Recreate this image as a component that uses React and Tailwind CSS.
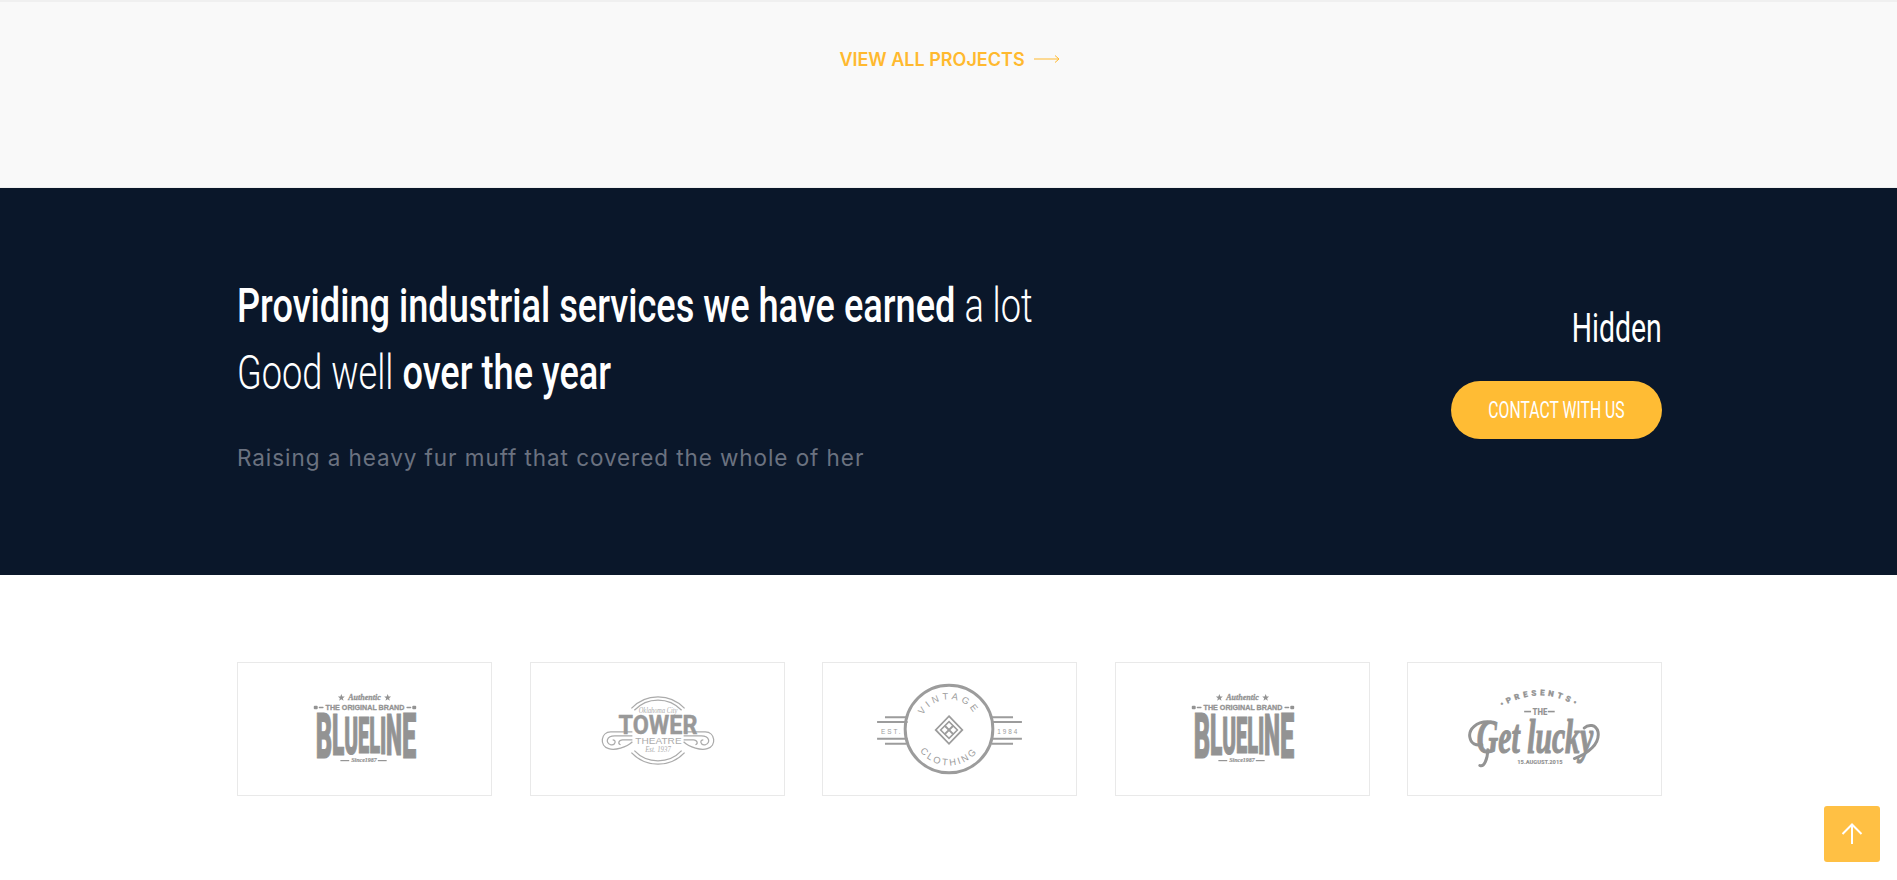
import React from "react";

const cond = "font-['Roboto',sans-serif]";

const blue = [
  ["B", 0.64], ["L", 0.54], ["U", 0.65], ["E", 0.56],
  ["L", 0.54], ["I", 0.29], ["N", 0.7], ["E", 0.56],
];

function Star({ x, y }) {
  return <polygon points={`${x},${y - 3.5} ${x + 1},${y - 1} ${x + 3.5},${y - 1} ${x + 1.5},${y + 0.7} ${x + 2.2},${y + 3.2} ${x},${y + 1.7} ${x - 2.2},${y + 3.2} ${x - 1.5},${y + 0.7} ${x - 3.5},${y - 1} ${x - 1},${y - 1}`} />;
}

function BluelineWord() {
  const base = blue.map(([ch, a], i) => {
    const t = (i - 3.5) / 3.5;
    const inset = 5 * (1 - t * t);
    const size = (46 - inset * 2) / 0.711;
    return { ch, a, inset, size };
  });
  const total = base.reduce((s, l) => s + l.a * l.size, 0);
  const sx = 102 / total;
  let pos = 0;
  const spans = base.map((l, i) => {
    const x = pos;
    pos += l.a * l.size;
    return (
      <tspan key={i} x={x} y={96 - l.inset} fontSize={l.size}>{l.ch}</tspan>
    );
  });
  return (
    <text transform={`translate(78 0) scale(${sx} 1)`} fontWeight="900" stroke="#939393" strokeWidth="1.2" className={cond}>
      {spans}
    </text>
  );
}

function Blueline() {
  return (
    <svg viewBox="0 0 255 134" className="w-full h-full" fill="#939393">
      <Star x={104} y={35} />
      <Star x={151} y={35} />
      <text x="127.5" y="38" fontSize="8" fontWeight="700" fontStyle="italic" textAnchor="middle" textLength="33" lengthAdjust="spacingAndGlyphs" stroke="#939393" strokeWidth="0.3" className="font-['Liberation_Serif']">Authentic</text>
      <rect x="76" y="43.5" width="4" height="3.5" rx="1" />
      <rect x="81" y="44.5" width="5" height="1.5" rx="0.7" />
      <rect x="170" y="44.5" width="5" height="1.5" rx="0.7" />
      <rect x="176" y="43.5" width="4" height="3.5" rx="1" />
      <text x="128" y="48" fontSize="7" fontWeight="700" textAnchor="middle" textLength="80" lengthAdjust="spacingAndGlyphs" stroke="#939393" strokeWidth="0.3" className="font-['Liberation_Sans']">THE ORIGINAL BRAND</text>
      <BluelineWord />
      <rect x="103" y="98.5" width="9" height="1.2" />
      <rect x="141" y="98.5" width="9" height="1.2" />
      <text x="127" y="101" fontSize="7" fontWeight="700" fontStyle="italic" textAnchor="middle" textLength="26" lengthAdjust="spacingAndGlyphs" stroke="#939393" strokeWidth="0.2" className="font-['Liberation_Serif']">Since1987</text>
    </svg>
  );
}

function Tower() {
  const c = "#ababab";
  const scroll = "M102 74 H84 C76 74 74 81 80 83 C85 84 86 78 82 78 M102 70 H80 C70 70 68 84 78 87 C84 89 96 86 102 80 M102 78 H92 C88 78 87 82 90 83";
  return (
    <svg viewBox="0 0 255 134" className="w-full h-full" fill={c}>
      <g fill="none" stroke={c} strokeWidth="1.3">
        <path d="M101 46 A37 37 0 0 1 155 46" />
        <path d="M104 48 A33 33 0 0 1 152 48" />
        <path d="M101 91 A37 37 0 0 0 155 91" />
        <path d="M104 89 A33 33 0 0 0 152 89" />
        <path d={scroll} />
        <g transform="translate(256 0) scale(-1 1)"><path d={scroll} /></g>
      </g>
      <text x="128" y="51" fontSize="7.5" fontStyle="italic" textAnchor="middle" textLength="39" lengthAdjust="spacingAndGlyphs" className="font-['Liberation_Serif']">Oklahoma City</text>
      <text x="88" y="72.5" fontSize="27" fontWeight="700" textLength="80" lengthAdjust="spacingAndGlyphs" fill="#999" stroke="#999" strokeWidth="0.5" className={cond}>TOWER</text>
      <text x="105" y="82.5" fontSize="10" textLength="47" lengthAdjust="spacingAndGlyphs" className="font-['Liberation_Sans']">THEATRE</text>
      <text x="128" y="90" fontSize="7.5" fontStyle="italic" textAnchor="middle" textLength="26" lengthAdjust="spacingAndGlyphs" className="font-['Liberation_Serif']">Est. 1937</text>
    </svg>
  );
}

function Vintage() {
  const c = "#9c9c9c";
  return (
    <svg viewBox="0 0 255 134" className="w-full h-full" fill={c}>
      <defs>
        <path id="v-top" d="M97 67 A30 30 0 0 1 157 67" />
        <path id="v-bot" d="M90 67 A37 37 0 0 0 164 67" />
      </defs>
      <circle cx="127" cy="67" r="44.5" fill="none" stroke={c} strokeWidth="3" />
      <g fill="none" stroke={c} strokeWidth="2">
        <path d="M62 55 H84 M54 60 H85 M54 77 H85 M62 82 H84 M170 55 H192 M170 60 H201 M170 77 H201 M170 82 H192" />
        <path d="M127 54 L140.5 68 L127 82 L113.5 68 Z" strokeWidth="1.8" />
        <path d="M127 59.5 L135.5 68 L127 76.5 L118.5 68 Z" strokeWidth="1.6" />
        <path d="M122.5 63.5 L131.5 72.5 M131.5 63.5 L122.5 72.5" strokeWidth="2" />
      </g>
      <text fontSize="9.5" letterSpacing="3.4" className="font-['Liberation_Sans']">
        <textPath href="#v-top" startOffset="50%" textAnchor="middle">VINTAGE</textPath>
      </text>
      <text fontSize="9.5" letterSpacing="2.4" className="font-['Liberation_Sans']">
        <textPath href="#v-bot" startOffset="50%" textAnchor="middle">CLOTHING</textPath>
      </text>
      <text x="58" y="72" fontSize="6.5" letterSpacing="2" className="font-['Liberation_Sans']">EST.</text>
      <text x="176" y="72" fontSize="6.5" letterSpacing="2" className="font-['Liberation_Sans']">1984</text>
    </svg>
  );
}

function Lucky() {
  const c = "#939393";
  return (
    <svg viewBox="0 0 255 134" className="w-full h-full" fill={c}>
      <defs>
        <path id="l-top" d="M91 47 Q133 19 175 47" />
      </defs>
      <text fontSize="8" fontWeight="900" letterSpacing="3.6" stroke={c} strokeWidth="0.3" className={cond}>
        <textPath href="#l-top" startOffset="50%" textAnchor="middle">•PRESENTS•</textPath>
      </text>
      <rect x="117" y="48.5" width="7" height="1.6" />
      <rect x="141" y="48.5" width="7" height="1.6" />
      <text x="133" y="53" fontSize="10" fontWeight="900" textAnchor="middle" textLength="15" lengthAdjust="spacingAndGlyphs" className={cond}>THE</text>
      <text x="69" y="91" fontSize="50" fontWeight="700" fontStyle="italic" textLength="118" lengthAdjust="spacingAndGlyphs" stroke={c} strokeWidth="1.2" className="font-['Liberation_Serif']">Get lucky</text>
      <path d="M84 60 C68 58 60 68 62 76 C63 82 68 84 74 83 M168 97 C182 92 194 82 192 70 C190 62 182 62 178 66 M80 88 C80 98 76 106 72 104" fill="none" stroke={c} strokeWidth="3" strokeLinecap="round" />
      <text x="133" y="103" fontSize="5.5" fontWeight="900" textAnchor="middle" textLength="46" lengthAdjust="spacingAndGlyphs" className={cond}>15.AUGUST.2015</text>
    </svg>
  );
}

function Card({ children }) {
  return <div className="w-[255px] h-[134px] border border-[#e9e9e9] bg-white">{children}</div>;
}

export default function App() {
  return (
    <div className="relative min-h-[880px] bg-white overflow-hidden">
      <section className="h-[188px] bg-[#f9f9f9] border-t-2 border-b border-[#f0f0f0] flex justify-center pt-[45px] pl-[2px]">
        <a className="flex items-center gap-[9px] h-[24px] text-[#ffb92f] text-[18px] font-semibold font-['Inter',sans-serif] tracking-[0px]">
          VIEW ALL PROJECTS
          <svg width="26" height="10" viewBox="0 0 26 10" fill="none" stroke="#ffb92f" strokeWidth="1">
            <path d="M0 5 H25 M21 1.5 L25 5 L21 8.5" />
          </svg>
        </a>
      </section>

      <section className="h-[387px] bg-[#0a172a] flex justify-center pl-[2px]">
        <div className="w-[1425px] flex justify-between pt-[84px]">
          <div>
            <h2 className={`${cond} text-white text-[49px] leading-[67px] font-medium whitespace-nowrap origin-left scale-x-[0.738]`}>
              Providing industrial services we have earned <span className="font-light">a lot</span>
              <br />
              <span className="font-light">Good well</span> over the year
            </h2>
            <p className="mt-[37px] text-[22.5px] leading-[30px] tracking-[0.93px] text-[#6b7280] font-['Inter',sans-serif] font-normal">
              Raising a heavy fur muff that covered the whole of her
            </p>
          </div>
          <div className="flex flex-col items-end pt-[33px]">
            <div className={`${cond} text-white text-[40px] leading-[48px] font-normal origin-right scale-x-[0.71]`}>Hidden</div>
            <button className="mt-[28px] w-[211px] h-[58px] rounded-full bg-[#ffbc34] flex items-center justify-center pt-[2px]">
              <span className={`${cond} text-white text-[23px] font-normal whitespace-nowrap scale-x-[0.685]`}>CONTACT WITH US</span>
            </button>
          </div>
        </div>
      </section>

      <section className="flex justify-center pt-[87px] pl-[2px]">
        <div className="w-[1425px] flex justify-between">
          <Card><Blueline /></Card>
          <Card><Tower /></Card>
          <Card><Vintage /></Card>
          <Card><Blueline /></Card>
          <Card><Lucky /></Card>
        </div>
      </section>

      <div className="absolute left-[1824px] top-[806px] w-[56px] h-[56px] rounded-[3px] bg-[#ffc044] flex items-center justify-center">
        <svg width="22" height="22" viewBox="0 0 22 22" fill="none" stroke="#fff" strokeWidth="2">
          <path d="M11 21 V1.5 M1.5 11 L11 1.5 L20.5 11" />
        </svg>
      </div>
    </div>
  );
}
